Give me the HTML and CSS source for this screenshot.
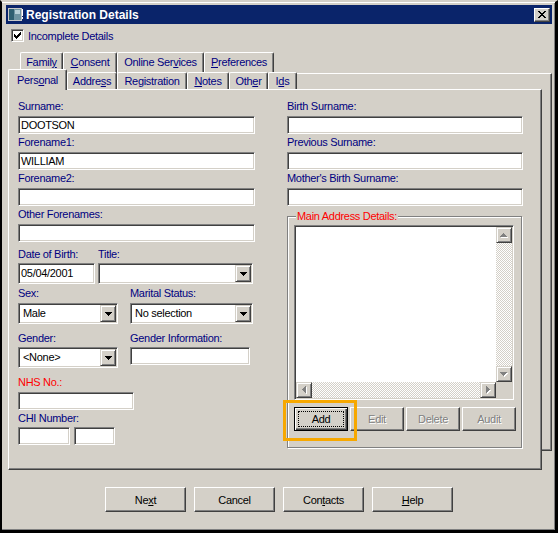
FILE: index.html
```html
<!DOCTYPE html>
<html>
<head>
<meta charset="utf-8">
<title>Registration Details</title>
<link rel="stylesheet" href="styles.css">
</head>
<body>
<div class="window">
  <div class="titlebar">
    <svg class="appicon" width="16" height="16" viewBox="0 0 16 16" shape-rendering="crispEdges">
      <rect x="0" y="1" width="14" height="13" fill="#c8c8c8"/>
      <rect x="1" y="2" width="12" height="11" fill="#6f95a3"/>
      <rect x="1" y="2" width="5" height="11" fill="#2f6072"/>
      <rect x="7" y="3" width="5" height="4" fill="#b7d0d8"/>
      <rect x="14" y="2" width="1" height="7" fill="#ffffff"/>
      <rect x="14" y="10" width="1" height="2" fill="#ffffff"/>
    </svg>
    <span class="title">Registration Details</span>
    <span class="close">
      <svg width="8" height="7" viewBox="0 0 8 7" shape-rendering="crispEdges">
        <rect x="0" y="0" width="2" height="1"/><rect x="6" y="0" width="2" height="1"/>
        <rect x="1" y="1" width="2" height="1"/><rect x="5" y="1" width="2" height="1"/>
        <rect x="2" y="2" width="4" height="1"/>
        <rect x="3" y="3" width="2" height="1"/>
        <rect x="2" y="4" width="4" height="1"/>
        <rect x="1" y="5" width="2" height="1"/><rect x="5" y="5" width="2" height="1"/>
        <rect x="0" y="6" width="2" height="1"/><rect x="6" y="6" width="2" height="1"/>
      </svg>
    </span>
  </div>

  <div class="client">
    <div class="chkrow">
      <span class="chkbox">
        <svg width="7" height="7" viewBox="0 0 7 7" shape-rendering="crispEdges">
          <rect x="6" y="0" width="1" height="3"/><rect x="5" y="1" width="1" height="3"/>
          <rect x="4" y="2" width="1" height="3"/><rect x="3" y="3" width="1" height="3"/>
          <rect x="2" y="4" width="1" height="3"/><rect x="1" y="3" width="1" height="3"/>
          <rect x="0" y="2" width="1" height="3"/>
        </svg>
      </span>
      <span class="chklabel">Incomplete Details</span>
    </div>

    <div class="tabctl">
      <div class="tabrow row1">
        <div class="tab w-family">Famil<u>y</u></div>
        <div class="tab w-consent"><u>C</u>onsent</div>
        <div class="tab w-online">Online Ser<u>v</u>ices</div>
        <div class="tab w-pref"><u>P</u>references</div>
      </div>
      <div class="sheet-back">
        <div class="tabrow row2">
          <div class="tab sel w-personal">Pers<u>o</u>nal</div>
          <div class="tab w-address">Addre<u>s</u>s</div>
          <div class="tab w-reg">Registration</div>
          <div class="tab w-notes"><u>N</u>otes</div>
          <div class="tab w-other">Oth<u>e</u>r</div>
          <div class="tab w-ids">I<u>d</u>s</div>
        </div>
        <div class="page">
          <div class="col">
            <span class="lbl">Surname:</span>
            <div class="edit">DOOTSON</div>
            <span class="lbl mt2">Forename1:</span>
            <div class="edit">WILLIAM</div>
            <span class="lbl mt2">Forename2:</span>
            <div class="edit"></div>
            <span class="lbl mt2">Other Forenames:</span>
            <div class="edit"></div>

            <div class="pair dob-row">
              <div class="fld w77">
                <span class="lbl">Date of Birth:</span>
                <div class="edit tall">05/04/2001</div>
              </div>
              <div class="fld w155">
                <span class="lbl">Title:</span>
                <div class="combo"><span class="val"></span><span class="dd"><svg width="7" height="4" viewBox="0 0 7 4" shape-rendering="crispEdges"><rect x="0" y="0" width="7" height="1"/><rect x="1" y="1" width="5" height="1"/><rect x="2" y="2" width="3" height="1"/><rect x="3" y="3" width="1" height="1"/></svg></span></div>
              </div>
            </div>

            <div class="pair sex-row">
              <div class="fld w100">
                <span class="lbl">Sex:</span>
                <div class="combo"><span class="val">Male</span><span class="dd"><svg width="7" height="4" viewBox="0 0 7 4" shape-rendering="crispEdges"><rect x="0" y="0" width="7" height="1"/><rect x="1" y="1" width="5" height="1"/><rect x="2" y="2" width="3" height="1"/><rect x="3" y="3" width="1" height="1"/></svg></span></div>
              </div>
              <div class="fld w123">
                <span class="lbl">Marital Status:</span>
                <div class="combo"><span class="val">No selection</span><span class="dd"><svg width="7" height="4" viewBox="0 0 7 4" shape-rendering="crispEdges"><rect x="0" y="0" width="7" height="1"/><rect x="1" y="1" width="5" height="1"/><rect x="2" y="2" width="3" height="1"/><rect x="3" y="3" width="1" height="1"/></svg></span></div>
              </div>
            </div>

            <div class="pair gender-row">
              <div class="fld w100">
                <span class="lbl">Gender:</span>
                <div class="combo"><span class="val">&lt;None&gt;</span><span class="dd"><svg width="7" height="4" viewBox="0 0 7 4" shape-rendering="crispEdges"><rect x="0" y="0" width="7" height="1"/><rect x="1" y="1" width="5" height="1"/><rect x="2" y="2" width="3" height="1"/><rect x="3" y="3" width="1" height="1"/></svg></span></div>
              </div>
              <div class="fld w120">
                <span class="lbl">Gender Information:</span>
                <div class="edit"></div>
              </div>
            </div>

            <span class="lbl red nhs-lbl">NHS No.:</span>
            <div class="edit w116"></div>
            <span class="lbl chi-lbl">CHI Number:</span>
            <div class="chi">
              <div class="edit w52"></div>
              <div class="edit w41"></div>
            </div>
          </div>

          <div class="col">
            <span class="lbl">Birth Surname:</span>
            <div class="edit"></div>
            <span class="lbl mt2">Previous Surname:</span>
            <div class="edit"></div>
            <span class="lbl mt2">Mother's Birth Surname:</span>
            <div class="edit"></div>

            <div class="group">
              <span class="legend">Main Address Details:</span>
              <div class="listbox">
                <div class="listarea"></div>
                <div class="vscroll">
                  <span class="sbtn"><svg width="8" height="5" viewBox="0 0 8 5" shape-rendering="crispEdges"><g fill="#fff" transform="translate(1,1)"><rect x="3" y="0" width="1" height="1"/><rect x="2" y="1" width="3" height="1"/><rect x="1" y="2" width="5" height="1"/><rect x="0" y="3" width="7" height="1"/></g><g fill="#808080"><rect x="3" y="0" width="1" height="1"/><rect x="2" y="1" width="3" height="1"/><rect x="1" y="2" width="5" height="1"/><rect x="0" y="3" width="7" height="1"/></g></svg></span>
                  <span class="track"></span>
                  <span class="sbtn"><svg width="8" height="5" viewBox="0 0 8 5" shape-rendering="crispEdges"><g fill="#fff" transform="translate(1,1)"><rect x="0" y="0" width="7" height="1"/><rect x="1" y="1" width="5" height="1"/><rect x="2" y="2" width="3" height="1"/><rect x="3" y="3" width="1" height="1"/></g><g fill="#808080"><rect x="0" y="0" width="7" height="1"/><rect x="1" y="1" width="5" height="1"/><rect x="2" y="2" width="3" height="1"/><rect x="3" y="3" width="1" height="1"/></g></svg></span>
                </div>
                <div class="hscroll">
                  <span class="sbtn"><svg width="5" height="8" viewBox="0 0 5 8" shape-rendering="crispEdges"><g fill="#fff" transform="translate(1,1)"><rect x="0" y="3" width="1" height="1"/><rect x="1" y="2" width="1" height="3"/><rect x="2" y="1" width="1" height="5"/><rect x="3" y="0" width="1" height="7"/></g><g fill="#808080"><rect x="0" y="3" width="1" height="1"/><rect x="1" y="2" width="1" height="3"/><rect x="2" y="1" width="1" height="5"/><rect x="3" y="0" width="1" height="7"/></g></svg></span>
                  <span class="track"></span>
                  <span class="sbtn"><svg width="5" height="8" viewBox="0 0 5 8" shape-rendering="crispEdges"><g fill="#fff" transform="translate(1,1)"><rect x="0" y="0" width="1" height="7"/><rect x="1" y="1" width="1" height="5"/><rect x="2" y="2" width="1" height="3"/><rect x="3" y="3" width="1" height="1"/></g><g fill="#808080"><rect x="0" y="0" width="1" height="7"/><rect x="1" y="1" width="1" height="5"/><rect x="2" y="2" width="1" height="3"/><rect x="3" y="3" width="1" height="1"/></g></svg></span>
                </div>
                <div class="corner"></div>
              </div>
              <div class="gbtns">
                <span class="hl"><span class="btn small default"><span class="focus">Add</span></span></span>
                <span class="btn small disabled">Edit</span>
                <span class="btn small disabled">Delete</span>
                <span class="btn small disabled">Audit</span>
              </div>
            </div>
          </div>
        </div>
      </div>
    </div>

    <div class="dlgbtns">
      <span class="btn big">Ne<u>x</u>t</span>
      <span class="btn big">Cancel</span>
      <span class="btn big">Con<u>t</u>acts</span>
      <span class="btn big"><u>H</u>elp</span>
    </div>
  </div>
</div>
</body>
</html>
```

FILE: styles.css
```css
* { box-sizing: border-box; }
html, body { margin: 0; padding: 0; }
body {
  width: 558px;
  height: 533px;
  overflow: hidden;
  background: #d4d0c8;
  font-family: "Liberation Sans", Arial, sans-serif;
  font-size: 11px;
  letter-spacing: -0.3px;
  color: #000;
}
u { text-decoration: underline; text-underline-offset: 1px; }

.window {
  width: 558px;
  height: 533px;
  background: #d4d0c8;
  border-style: solid;
  border-width: 2px 3px 3px 2px;
  border-color: #d4d0c8 #000 #000 #000;
  box-shadow: inset 0 1px 0 #fff, inset -1px -1px 0 #808080;
  padding: 3px 3px 0 4px;
}

/* Title bar */
.titlebar {
  height: 19px;
  background: #0a246a;
  display: flex;
  align-items: center;
  padding: 0 2px 0 2px;
  color: #fff;
}
.appicon { display: block; margin-right: 2px; }
.title {
  flex: 1;
  font-weight: bold;
  font-size: 12px;
  letter-spacing: 0;
}
.close {
  width: 16px;
  height: 14px;
  background: #d4d0c8;
  border: 1px solid;
  border-color: #fff #404040 #404040 #fff;
  box-shadow: inset -1px -1px 0 #808080;
  display: flex;
  align-items: center;
  justify-content: center;
  padding-right: 1px;
}
.close svg { display: block; fill: #000; }

/* checkbox */
.chkrow {
  display: flex;
  align-items: center;
  margin-top: 5px;
  padding-left: 5px;
  height: 13px;
}
.chkbox {
  width: 13px;
  height: 13px;
  background: #fff;
  border: 1px solid;
  border-color: #808080 #fff #fff #808080;
  box-shadow: inset 1px 1px 0 #404040, inset -1px -1px 0 #d4d0c8;
  display: flex;
  align-items: center;
  justify-content: center;
}
.chkbox svg { display: block; fill: #000; }
.chklabel { margin-left: 4px; color: #000080; }

/* tabs */
.tabctl { margin-top: 10px; }
.tabrow { display: flex; align-items: flex-start; }
.row1 { margin-left: 14px; height: 21px; }
.tab {
  height: 21px;
  background: #d4d0c8;
  border-top: 1px solid #fff;
  border-left: 1px solid #fff;
  border-right: 1px solid #404040;
  box-shadow: inset -1px 0 0 #808080;
  border-top-left-radius: 2px;
  border-top-right-radius: 2px;
  color: #000080;
  text-align: center;
  line-height: 18px;
  white-space: nowrap;
}
.row2 { margin-top: -5px; height: 20px; }
.row2 .tab { margin-top: 3px; height: 17px; line-height: 17px; }
.row2 .tab.sel {
  margin-top: 0;
  height: 21px;
  line-height: 21px;
  position: relative;
  z-index: 1;
}
.w-family { width: 43px; }
.w-consent { width: 54px; }
.w-online { width: 87px; }
.w-pref { width: 70px; }
.w-personal { width: 59px; }
.w-address { width: 50px; }
.w-reg { width: 70px; }
.w-notes { width: 42px; }
.w-other { width: 39px; }
.w-ids { width: 29px; }

.sheet-back {
  margin-left: 2px;
  width: 544px;
  border-top: 1px solid #fff;
  border-right: 1px solid #404040;
  border-bottom: 1px solid #404040;
  box-shadow: inset -1px -1px 0 #808080;
}
.page {
  width: 534px;
  height: 381px;
  margin-bottom: -20px;
  background: #d4d0c8;
  border: 1px solid;
  border-color: #fff #404040 #404040 #fff;
  box-shadow: inset -1px -1px 0 #808080;
  display: grid;
  grid-template-columns: 237px 236px;
  column-gap: 32px;
  padding: 10px 0 0 9px;
  align-items: start;
}

.col { display: flex; flex-direction: column; align-items: flex-start; }
.col > .edit { width: 100%; }
.lbl {
  display: block;
  height: 13px;
  line-height: 13px;
  color: #000080;
  white-space: nowrap;
  margin-bottom: 3px;
}
.lbl.mt2 { margin-top: 2px; }
.red { color: #ff0000; }

.edit {
  height: 18px;
  background: #fff;
  border: 1px solid;
  border-color: #808080 #fff #fff #808080;
  box-shadow: inset 1px 1px 0 #404040, inset -1px -1px 0 #d4d0c8;
  padding: 0 2px;
  line-height: 16px;
  white-space: nowrap;
}
.edit.tall { height: 21px; line-height: 19px; }

.pair { display: flex; width: 100%; }
.fld { display: flex; flex-direction: column; }
.fld .lbl { margin-bottom: 2px; }
.dob-row { margin-top: 6px; gap: 3px; }
.sex-row { margin-top: 3px; gap: 12px; }
.sex-row .lbl { margin-bottom: 3px; }
.gender-row { margin-top: 8px; gap: 12px; }
.w77 { width: 77px; }
.w155 { width: 155px; }
.w100 { width: 100px; }
.w123 { width: 123px; }
.w120 { width: 120px; }
.col > .edit.w116 { width: 116px; }
.w52 { width: 52px; }
.w41 { width: 41px; }

.combo {
  height: 21px;
  display: flex;
  background: #fff;
  border: 1px solid;
  border-color: #808080 #fff #fff #808080;
  box-shadow: inset 1px 1px 0 #404040, inset -1px -1px 0 #d4d0c8;
  padding: 1px;
}
.combo .val {
  flex: 1;
  line-height: 17px;
  padding-left: 3px;
  white-space: nowrap;
}
.dd, .sbtn {
  width: 16px;
  height: 17px;
  background: #d4d0c8;
  border: 1px solid;
  border-color: #d4d0c8 #404040 #404040 #d4d0c8;
  box-shadow: inset 1px 1px 0 #fff, inset -1px -1px 0 #808080;
  display: flex;
  align-items: center;
  justify-content: center;
  flex: none;
}
.dd svg, .sbtn svg { display: block; fill: #000; }

.nhs-lbl { margin-top: 8px; }
.chi-lbl { margin-top: 2px; margin-bottom: 2px; }
.chi { display: flex; gap: 4px; }

/* group box */
.group {
  margin-top: 10px;
  width: 235px;
  height: 232px;
  border: 1px solid #808080;
  box-shadow: 1px 1px 0 #fff, inset 1px 1px 0 #fff;
  padding: 0 0 0 6px;
}
.legend {
  display: block;
  width: max-content;
  margin: -7px 0 0 2px;
  padding: 0 1px;
  height: 13px;
  line-height: 13px;
  background: #d4d0c8;
  color: #ff0000;
}
.listbox {
  margin-top: 2px;
  width: 220px;
  height: 175px;
  border: 1px solid;
  border-color: #808080 #fff #fff #808080;
  box-shadow: inset 1px 1px 0 #404040, inset -1px -1px 0 #d4d0c8;
  padding: 1px;
  display: grid;
  grid-template-columns: 1fr 16px;
  grid-template-rows: 1fr 16px;
}
.listarea { background: #fff; }
.vscroll { display: flex; flex-direction: column; }
.hscroll { display: flex; }
.vscroll .sbtn, .hscroll .sbtn { width: 16px; height: 16px; }
.track {
  flex: 1;
  background: repeating-conic-gradient(#d4d0c8 0 25%, #fff 0 50%) 0 0 / 2px 2px;
}
.corner { background: #d4d0c8; }

.gbtns { margin-top: 7px; display: flex; gap: 2px; }

/* buttons */
.btn {
  display: flex;
  align-items: center;
  justify-content: center;
  background: #d4d0c8;
  border: 1px solid;
  border-color: #fff #404040 #404040 #fff;
  box-shadow: inset -1px -1px 0 #808080;
  color: #000;
  white-space: nowrap;
}
.btn.small { width: 54px; height: 24px; }
.btn.big { width: 81px; height: 25px; }
.btn.disabled { color: #808080; text-shadow: 1px 1px 0 #fff; }
.btn.default {
  border: 1px solid #000;
  box-shadow: inset 1px 1px 0 #fff, inset -1px -1px 0 #404040, inset -2px -2px 0 #808080;
  padding: 3px;
}
.focus {
  flex: 1;
  align-self: stretch;
  border: 1px dotted #000;
  display: flex;
  align-items: center;
  justify-content: center;
}
.hl { position: relative; display: block; }
.hl::after {
  content: "";
  position: absolute;
  top: -7px;
  left: -11px;
  right: -9px;
  bottom: -10px;
  border: 3px solid #f7a800;
  pointer-events: none;
}

.dlgbtns {
  margin-top: 36px;
  display: flex;
  justify-content: center;
  gap: 8px;
}
```
